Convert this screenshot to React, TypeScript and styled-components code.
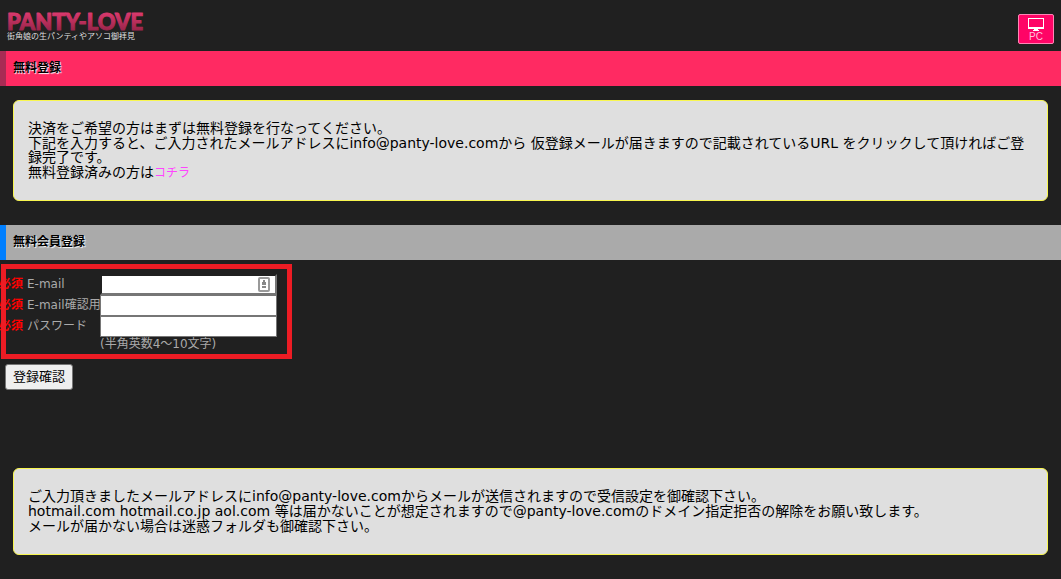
import React from "react";
import styled, { createGlobalStyle } from "styled-components";

const GlobalStyle = createGlobalStyle`
  * { box-sizing: border-box; }
  body {
    margin: 0;
    background: #202020;
    color: #aaa;
    font-family: "DejaVu Sans", "Noto Sans CJK JP", sans-serif;
    font-size: 12px;
    line-height: 14px;
    overflow-x: hidden;
  }
`;

const Header = styled.header`
  display: flex;
  justify-content: space-between;
  align-items: flex-start;
  padding: 13px 7px 7px;
`;

const Logo = styled.a`
  display: block;
  text-decoration: none;
  white-space: nowrap;
`;

const LogoName = styled.svg`
  display: block;
  overflow: visible;
  font-family: Lato, sans-serif;
  font-weight: 900;
  font-size: 22px;
`;

const LogoTagline = styled.span`
  display: block;
  font-size: 8px;
  line-height: 12px;
  color: #ddd;
`;

const PcButton = styled.button`
  display: flex;
  flex-direction: column;
  align-items: center;
  width: 36px;
  height: 30px;
  margin-top: 1px;
  padding: 2px 0 0;
  border: 1px solid #ff85b5;
  border-radius: 2px;
  background: #ff0466;
  color: #ffc0da;
  font: 10px/12px "Liberation Sans", sans-serif;
`;

const Heading = styled.h2<{ $bg: string; $edge: string }>`
  height: 35px;
  margin: 0;
  padding: 10px 7px;
  border-left: 6px solid ${(p) => p.$edge};
  background: ${(p) => p.$bg};
  color: #000;
  font-size: 12px;
  line-height: 14px;
  font-weight: 700;
  text-shadow: 1px 1px 1px #fff;
`;

const Notice = styled.section`
  display: flex;
  flex-direction: column;
  gap: 1px;
  margin: 14px 13px 24px;
  padding: 20px 14px 21px;
  border: 1px solid #f8f650;
  border-radius: 6px;
  background: #dfdfdf;
  color: #000;
  font-size: 14px;
  line-height: 14px;
`;

const Line = styled.p`
  margin: 0;
`;

const PinkLink = styled.a`
  color: #ff44ff;
  font-size: 12px;
  line-height: 12px;
  text-decoration: none;
`;

const Form = styled.form`
  min-height: 194px;
`;

const Fields = styled.div`
  position: relative;
  width: 293px;
  padding: 14px 0 8px;
`;

const Highlight = styled.div`
  position: absolute;
  inset: 4px 1px 0;
  border: 5px solid #ed1c24;
  pointer-events: none;
`;

const Row = styled.div`
  display: grid;
  grid-template-columns: 100px 177px;
  height: 21px;
`;

const Label = styled.label`
  line-height: 20px;
  white-space: nowrap;
`;

const Required = styled.span`
  margin: 0 4px 0 -1px;
  color: #f00;
  font-weight: 700;
`;

const InputWrap = styled.div`
  position: relative;
`;

const Input = styled.input<{ $raised?: boolean }>`
  display: block;
  width: 100%;
  height: 21px;
  padding: 1px 2px;
  border: ${(p) => (p.$raised ? "2px" : "1px")} solid #767676;
  border-top-color: ${(p) => (p.$raised ? "transparent" : "#767676")};
  border-left-color: ${(p) => (p.$raised ? "transparent" : "#767676")};
  background: #fff;
  background-clip: padding-box;
  font: inherit;
`;

const FillIcon = styled.svg`
  position: absolute;
  right: 6px;
  top: 3px;
`;

const Hint = styled.p`
  margin: 0 0 0 100px;
`;

const Submit = styled.button`
  height: 26px;
  margin: 5px;
  padding: 0 7px;
  border: 1px solid #767676;
  border-radius: 3px;
  background: #efefef;
  color: #000;
  font: 13px/20px "DejaVu Sans", "Noto Sans CJK JP", sans-serif;
`;

const fields = [
  { id: "email", label: "E-mail", type: "email", icon: true },
  { id: "email-confirm", label: "E-mail確認用", type: "email" },
  { id: "password", label: "パスワード", type: "password" },
];

export default function App() {
  return (
    <>
      <GlobalStyle />
      <Header>
        <Logo href="#">
          <LogoName width="136" height="18">
            <defs>
              <linearGradient id="logo-pink" x1="0" y1="0" x2="0" y2="1">
                <stop offset="0.2" stopColor="#d8386c" />
                <stop offset="0.8" stopColor="#9c264c" />
              </linearGradient>
            </defs>
            <text x="0" y="17" fill="url(#logo-pink)" stroke="url(#logo-pink)" strokeWidth="1" strokeLinejoin="round">
              PANTY-LOVE
            </text>
          </LogoName>
          <LogoTagline>街角娘の生パンティやアソコ御拝見</LogoTagline>
        </Logo>
        <PcButton type="button">
          <svg width="18" height="14" viewBox="0 0 18 14" aria-hidden="true">
            <path d="M1 1h16v11H1zM2 2v8h14V2z" fill="#fff" fillRule="evenodd" />
            <path d="M7 12h4v1h1v1H6v-1h1z" fill="#fff" />
          </svg>
          PC
        </PcButton>
      </Header>
      <main>
        <Heading $bg="#ff2a62" $edge="#a92b54">無料登録</Heading>
        <Notice>
          <Line>決済をご希望の方はまずは無料登録を行なってください。</Line>
          <Line>
            下記を入力すると、ご入力されたメールアドレスにinfo@panty-love.comから 仮登録メールが届きますので記載されているURL をクリックして頂ければご登録完了です。
          </Line>
          <Line>
            無料登録済みの方は<PinkLink href="#">コチラ</PinkLink>
          </Line>
        </Notice>
        <Heading $bg="#aaa" $edge="#007fff">無料会員登録</Heading>
        <Form onSubmit={(e) => e.preventDefault()}>
          <Fields>
            {fields.map((f) => (
              <Row key={f.id}>
                <Label htmlFor={f.id}>
                  <Required>必須</Required>
                  {f.label}
                </Label>
                <InputWrap>
                  <Input id={f.id} type={f.type} $raised={f.icon} />
                  {f.icon && (
                    <FillIcon width="13" height="15" viewBox="0 0 13 15" aria-hidden="true">
                      <rect x="1" y="1" width="10" height="13" rx="1" fill="#fff" stroke="#999" strokeWidth="2" />
                      <path d="M5 3h2v2h1v3H4V5h1zM4 9h4v2H4z" fill="#888" />
                    </FillIcon>
                  )}
                </InputWrap>
              </Row>
            ))}
            <Hint>(半角英数4～10文字)</Hint>
            <Highlight />
          </Fields>
          <Submit type="submit">登録確認</Submit>
        </Form>
        <Notice>
          <Line>ご入力頂きましたメールアドレスにinfo@panty-love.comからメールが送信されますので受信設定を御確認下さい。</Line>
          <Line>hotmail.com hotmail.co.jp aol.com 等は届かないことが想定されますので@panty-love.comのドメイン指定拒否の解除をお願い致します。</Line>
          <Line>メールが届かない場合は迷惑フォルダも御確認下さい。</Line>
        </Notice>
      </main>
    </>
  );
}
